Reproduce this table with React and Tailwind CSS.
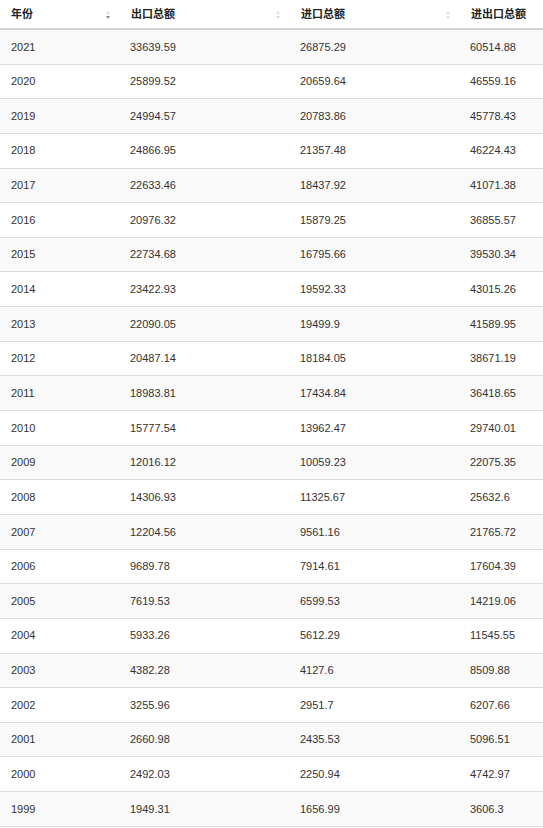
import React from 'react';

const rows = [
  ['2021', '33639.59', '26875.29', '60514.88'],
  ['2020', '25899.52', '20659.64', '46559.16'],
  ['2019', '24994.57', '20783.86', '45778.43'],
  ['2018', '24866.95', '21357.48', '46224.43'],
  ['2017', '22633.46', '18437.92', '41071.38'],
  ['2016', '20976.32', '15879.25', '36855.57'],
  ['2015', '22734.68', '16795.66', '39530.34'],
  ['2014', '23422.93', '19592.33', '43015.26'],
  ['2013', '22090.05', '19499.9', '41589.95'],
  ['2012', '20487.14', '18184.05', '38671.19'],
  ['2011', '18983.81', '17434.84', '36418.65'],
  ['2010', '15777.54', '13962.47', '29740.01'],
  ['2009', '12016.12', '10059.23', '22075.35'],
  ['2008', '14306.93', '11325.67', '25632.6'],
  ['2007', '12204.56', '9561.16', '21765.72'],
  ['2006', '9689.78', '7914.61', '17604.39'],
  ['2005', '7619.53', '6599.53', '14219.06'],
  ['2004', '5933.26', '5612.29', '11545.55'],
  ['2003', '4382.28', '4127.6', '8509.88'],
  ['2002', '3255.96', '2951.7', '6207.66'],
  ['2001', '2660.98', '2435.53', '5096.51'],
  ['2000', '2492.03', '2250.94', '4742.97'],
  ['1999', '1949.31', '1656.99', '3606.3'],
];

// tiny up/down sort arrows, the active one darker
const SortIcon = ({ active }) => (
  <svg width="6" height="12" viewBox="0 0 6 12" className="shrink-0">
    <path d="M3 3 L5 6 L1 6 Z" fill="#e0e0e0" />
    <path d="M1 8 L5 8 L3 11 Z" fill={active ? '#8a8a8a' : '#e0e0e0'} />
  </svg>
);

const headers = [
  { label: '年份', w: 'w-[120px]', active: true },
  { label: '出口总额', w: 'w-[170px]' },
  { label: '进口总额', w: 'w-[170px]' },
  { label: '进出口总额', w: 'w-[170px]' },
];

export default function App() {
  return (
    <div
      className="w-[543px] h-[828px] overflow-hidden bg-white text-[#333] text-[11px]"
      style={{ fontFamily: '"Liberation Sans", Arial, "Noto Sans CJK SC", sans-serif' }}
    >
      <div className="w-[630px]">
        {/* Header */}
        <div className="flex h-[30px] border-b-2 border-[#d4d4d4]">
          {headers.map((h, i) => (
            <div key={i} className={`${h.w} flex items-center justify-between pl-[11px] pr-[9px] font-bold text-[#222]`}>
              <span>{h.label}</span>
              <SortIcon active={h.active} />
            </div>
          ))}
        </div>

        {/* Body */}
        {rows.map((r, idx) => (
          <div
            key={r[0]}
            className={`flex h-[34.65px] items-center border-b border-[#dddddd] ${idx % 2 === 0 ? 'bg-[#f9f9f9]' : 'bg-white'}`}
          >
            <div className="w-[120px] pl-[11px]">{r[0]}</div>
            <div className="w-[170px] pl-[10px]">{r[1]}</div>
            <div className="w-[170px] pl-[10px]">{r[2]}</div>
            <div className="w-[170px] pl-[10px]">{r[3]}</div>
          </div>
        ))}
      </div>
    </div>
  );
}
